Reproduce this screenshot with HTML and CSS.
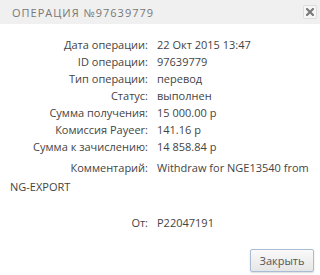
FILE: index.html
```html
<!DOCTYPE html>
<html lang="ru">

<head>
  <meta charset="UTF-8">
  <meta name="viewport" content="width=device-width, initial-scale=1.0">
  <title>Операция №97639779</title>
  <link rel="stylesheet" href="styles.css">
</head>

<body>
  <div class="dialog">
    <div class="dialog-header">
      <span class="dialog-title">Операция №97639779</span>
      <button class="close" title="Закрыть">
        <svg width="8" height="8" viewBox="0 0 8 8">
          <path d="M1 1L7 7M7 1L1 7" stroke="#7a7a7a" stroke-width="2.2" stroke-linecap="square" />
        </svg>
      </button>
    </div>

    <div class="dialog-body">
      <div class="row"><span class="label">Дата операции:</span><span class="value">22 Окт 2015 13:47</span></div>
      <div class="row"><span class="label">ID операции:</span><span class="value">97639779</span></div>
      <div class="row"><span class="label">Тип операции:</span><span class="value">перевод</span></div>
      <div class="row"><span class="label">Статус:</span><span class="value">выполнен</span></div>
      <div class="row"><span class="label">Сумма получения:</span><span class="value">15 000.00 р</span></div>
      <div class="row"><span class="label">Комиссия Payeer:</span><span class="value">141.16 р</span></div>
      <div class="row"><span class="label">Сумма к зачислению:</span><span class="value">14 858.84 р</span></div>
      <div class="row comment"><span class="label">Комментарий:</span><span class="value">Withdraw for NGE13540 from NG-EXPORT</span></div>
      <div class="row from"><span class="label">От:</span><span class="value">P22047191</span></div>
    </div>

    <div class="dialog-footer">
      <button class="btn">Закрыть</button>
    </div>
  </div>
</body>

</html>
```

FILE: styles.css
```css
* {
  margin: 0;
  padding: 0;
  box-sizing: border-box;
}

body {
  font-family: "Open Sans", Arial, sans-serif;
  background: #fff;
  color: #333;
  width: 320px;
  height: 275px;
  overflow: hidden;
}

.dialog {
  width: 320px;
  height: 275px;
  background: #fff;
}

/* Шапка */
.dialog-header {
  height: 24px;
  background: #f0f0f0;
  display: flex;
  align-items: center;
  justify-content: space-between;
  padding: 0 3px 0 12px;
}

.dialog-title {
  font-size: 11px;
  color: #777;
  text-transform: uppercase;
  letter-spacing: 1px;
}

.close {
  width: 14px;
  height: 14px;
  border: 1px solid #dcdcdc;
  border-radius: 2px;
  background: #f6f6f6;
  display: flex;
  align-items: center;
  justify-content: center;
}

/* Содержимое */
.dialog-body {
  padding: 12px 10px 0 10px;
  font-size: 11px;
  line-height: 17px;
}

.label {
  display: inline-block;
  width: 138px;
  text-align: right;
  margin-right: 9px;
  color: #444;
}

.value {
  color: #444;
}

.row.comment {
  margin-top: 3px;
  line-height: 19px;
}

.row.from {
  margin-top: 18px;
}

/* Кнопка */
.dialog-footer {
  display: flex;
  justify-content: flex-end;
  padding: 18px 6px 0 0;
}

.btn {
  font-family: "Open Sans", Arial, sans-serif;
  font-size: 11px;
  color: #555;
  width: 64px;
  height: 23px;
  border: 1px solid #a8bcd6;
  border-radius: 2px;
  background: linear-gradient(#fafafa, #e6e6e6);
  box-shadow: 0 1px 2px rgba(0, 0, 0, 0.15);
}
```
